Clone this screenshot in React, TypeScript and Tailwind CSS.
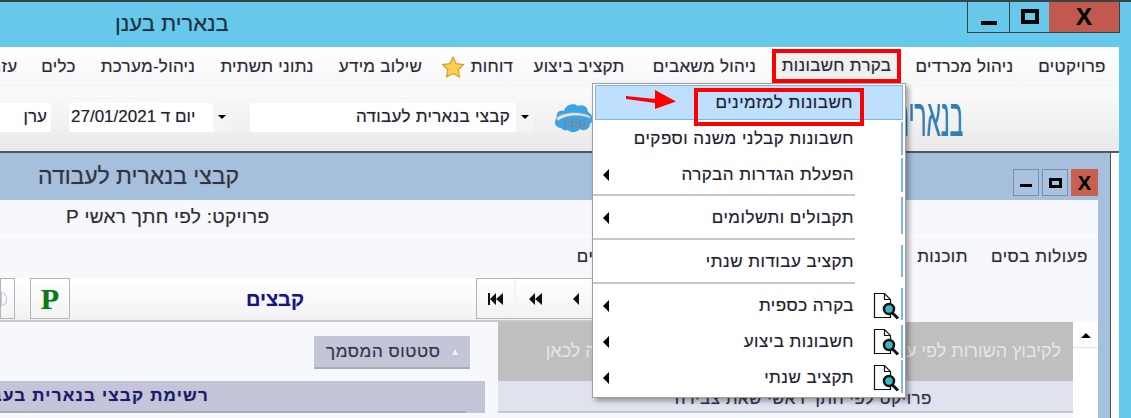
const MENU = [
  { label: "פרויקטים", w: "w-[68px]", ml: "ml-[26px]" },
  { label: "ניהול מכרדים", w: "w-[95px]", ml: "ml-[16px]" },
  { label: "בקרת חשבונות", w: "w-[129px]", ml: "ml-[14px]", boxed: true },
  { label: "ניהול משאבים", w: "w-[107px]", ml: "ml-[24px]" },
  { label: "תקציב ביצוע", w: "w-[96px]", ml: "ml-[17px]" },
  { label: "דוחות", w: "w-[44px]", ml: "ml-[5px]" },
  { star: true, w: "w-[24px]", ml: "ml-[17px]" },
  { label: "שילוב מידע", w: "w-[87px]", ml: "ml-[24px]" },
  { label: "נתוני תשתית", w: "w-[92px]", ml: "ml-[25px]" },
  { label: "ניהול-מערכת", w: "w-[96px]", ml: "ml-[24px]" },
  { label: "כלים", w: "w-[35px]", ml: "ml-[24px]" },
  { label: "עזרה", w: "w-[35px]", ml: "" },
];

const POPUP_ROWS = [
  { label: "חשבונות קבלני משנה וספקים", h: "h-[38px]" },
  { label: "הפעלת הגדרות הבקרה", h: "h-[34px]", sub: true },
  { sep: true },
  { label: "תקבולים ותשלומים", h: "h-[37px]", sub: true },
  { sep: true },
  { label: "תקציב עבודות שנתי", h: "h-[37px]" },
  { sep: true },
  { label: "בקרה כספית", h: "h-[37px]", sub: true, icon: true },
  { label: "חשבונות ביצוע", h: "h-[36px]", sub: true, icon: true },
  { label: "תקציב שנתי", h: "h-[36px]", sub: true, icon: true },
];

// light blue slivers left over along the right edge of the menu
const EDGE_STRIPS = [
  "top-[38px] h-[33px]",
  "top-[74px] h-[34px]",
  "top-[113px] h-[37px]",
  "top-[161px] h-[32px]",
  "top-[204px] h-[32px]",
  "top-[241px] h-[33px]",
  "top-[276px] h-[33px]",
];

function Star() {
  return (
    <svg width="25" height="25" viewBox="0 0 25 25">
      <path
        d="M12.5 1.5l3.3 7 7.7 1-5.6 5.3 1.4 7.7-6.8-3.7-6.8 3.7 1.4-7.7L1.5 9.500l7.700-1z"
        fill="#fbcf4e"
        stroke="#d99a2b"
        strokeWidth="1.2"
        strokeLinejoin="round"
      />
    </svg>
  );
}

function Cloud() {
  return (
    <svg width="42" height="38" viewBox="0 0 42 38">
      <path
        d="M8 30c-6 0-8-7-4-10-2-6 4-9 7-7 1-6 10-9 14-5 5-2 10 1 10 6 5 2 6 9 2 12 0 5-6 8-10 5-3 4-10 4-12 1-3 1-5 0-7-2z"
        fill="#3aa5e4"
      />
      <path d="M3 20c8-7 26-7 34-2l1 3c-9-5-25-4-33 2z" fill="#dbe3ea" stroke="#7d8b99" strokeWidth="0.6" />
      <text x="12" y="30" fontSize="10" fontStyle="italic" fontWeight="700" fill="#7f93a8" fontFamily="'Liberation Sans', sans-serif">
        PRO
      </text>
    </svg>
  );
}

function DocSearch() {
  return (
    <svg width="27" height="28" viewBox="0 0 27 28">
      <path d="M1.500 1.500h10l6 6v18h-16z" fill="#fff" stroke="#111" strokeWidth="1.200" />
      <path d="M11.500 1.500v6h6" fill="none" stroke="#111" strokeWidth="1.200" />
      <circle cx="16" cy="17" r="5" fill="#35b8c8" stroke="#111" strokeWidth="2.500" />
      <path d="M19.500 21l5.500 5.500" stroke="#111" strokeWidth="3" />
    </svg>
  );
}

function NavGlyph({ kind }: { kind: "first" | "prev" | "back" }) {
  return (
    <svg width="18" height="14" viewBox="0 0 18 14" fill="#111">
      {kind === "first" && <path d="M1 1h2v12H1zM9 1v12L3 7zM16 1v12l-7-6z" />}
      {kind === "prev" && <path d="M8 1v12L2 7zM15 1v12L8 7z" />}
      {kind === "back" && <path d="M12 1v12L6 7z" />}
    </svg>
  );
}

function TitleButtons() {
  return (
    <div className="flex h-[31px] border-b border-l border-r border-[#3c4347]">
      <div className="w-[42px] border-r border-[#3c4347] flex justify-center items-end pb-[7px]">
        <div className="w-[16px] h-[4px] bg-black" />
      </div>
      <div className="w-[39px] flex justify-center pt-[7px]">
        <div className="w-[18px] h-[15px] border-[4px] border-black" />
      </div>
      <div className="w-[70px] bg-[#c1594f] flex justify-center items-center font-bold text-[24px] text-black leading-none">X</div>
    </div>
  );
}

function SmallButton({ children, close }: { children: React.ReactNode; close?: boolean }) {
  return (
    <div className={`h-[27px] flex items-center justify-center border border-[#7d8fa8] ${close ? "w-[27px] bg-[#c9604f] border-[#c9604f]" : "w-[26px] bg-[#a9c2df]"}`}>
      {children}
    </div>
  );
}

function Popup() {
  return (
    <div className="absolute left-[592px] top-[81px] w-[314px] h-[315px] z-10 bg-white border border-[#a0a0a0] shadow-[3px_3px_5px_rgba(0,0,0,0.35)] text-[17px] tracking-[0.5px] text-[#22222e] pt-[1px] px-[2px]" dir="rtl">
      <div className="h-[35px] bg-[#bfdfff] border border-[#7db5ee] flex items-center pr-[49px]">
        <span>חשבונות למזמינים</span>
      </div>
      <div className="absolute left-[101px] top-[4px] w-[170px] h-[38px] border-[4px] border-[#ff0000]" />
      <svg className="absolute left-[33px] top-[6px]" width="50" height="19" viewBox="0 0 50 19">
        <path d="M0 6l29 3V0l21 11.500L29 19v-6L0 9z" fill="#ff0000" />
      </svg>
      {EDGE_STRIPS.map((s) => (
        <div key={s} className={`absolute left-[308px] w-[2px] bg-[#7db5ee] ${s}`} />
      ))}
      {POPUP_ROWS.map((r, i) =>
        r.sep ? (
          <div key={i} className="h-[2px] mt-[2px] mb-[3px] bg-[#c8c8c8] mr-[48px] -ml-[1px] w-[262px]" />
        ) : (
          <div key={i} className={`flex items-center ${r.h} pr-[3px]`}>
            <div className="w-[28px] flex justify-center">{r.icon && <DocSearch />}</div>
            <span className="mr-[18px] whitespace-nowrap">{r.label}</span>
            {r.sub && <span className="mr-auto ml-[8px] w-0 h-0 border-y-[6px] border-y-transparent border-r-[6px] border-r-black" />}
          </div>
        )
      )}
    </div>
  );
}

export default function App() {
  return (
    <div className="relative w-[1131px] h-[418px] overflow-hidden bg-[#66c9ec] font-['Liberation_Sans',sans-serif] border-t-2 border-[#3c4347] [text-shadow:0_0_1px_rgba(40,40,60,0.35)]">
      {/* window title */}
      <div className="h-[45px] flex items-start pl-[115px] pr-[11px]">
        <div className="text-[22px] leading-[44px] text-[#22303a]" dir="rtl">בנארית בענן</div>
        <div className="ml-auto"><TitleButtons /></div>
      </div>

      <div className="w-[1119px] flex flex-col bg-white">
        {/* menu */}
        <div className="h-[40px] flex flex-row-reverse items-center justify-start pr-[13px] text-[17px] tracking-[0.3px] text-[#2a2a36] bg-gradient-to-b from-white to-[#f6f6f6] overflow-hidden">
          {MENU.map((m, i) => (
            <div key={i} dir="rtl" className={`shrink-0 flex items-center justify-center whitespace-nowrap ${m.w} ${m.ml} ${m.boxed ? "h-[34px] border-[4px] border-[#ff0000] bg-[#f0f0f0] mt-[-2px]" : ""}`}>
              {m.star ? <Star /> : m.label}
            </div>
          ))}
        </div>

        {/* toolbar */}
        <div className="h-[66px] flex items-center bg-gradient-to-b from-[#fbfbfb] to-[#e9e9e9] text-[17px] text-[#22222e] border-b-2 border-[#55585c] pb-[4px]">
          <div className="w-[51px] h-[29px] bg-white flex items-center justify-end pr-[4px]"><span dir="rtl">ערן</span></div>
          <div className="ml-[18px] w-[162px] h-[29px] bg-white flex items-center justify-between">
            <span className="ml-[2px] whitespace-nowrap" dir="rtl">יום ד 27/01/2021</span>
            <div className="w-[18px] h-full bg-[#f4f4f4] flex items-center justify-center"><span className="border-x-[4px] border-x-transparent border-t-[4px] border-t-black" /></div>
          </div>
          <div className="ml-[19px] w-[284px] h-[29px] bg-white flex items-center justify-end">
            <span className="mr-[6px] tracking-[0.3px]" dir="rtl">קבצי בנארית לעבודה</span>
            <div className="w-[18px] h-full bg-[#f4f4f4] flex items-center justify-center"><span className="border-x-[4px] border-x-transparent border-t-[4px] border-t-black" /></div>
          </div>
          <div className="ml-[19px] w-[42px]"><Cloud /></div>
          <div className="ml-[296px] w-[75px] flex justify-center">
            <span className="text-[54px] leading-none text-[#2d7fb8] scale-x-[0.42] whitespace-nowrap" dir="rtl">בנארית</span>
          </div>
        </div>

        {/* inner window */}
        <div className="flex">
          <div className="w-[1111px] bg-[#a6bfdc] border-r border-[#4c5157]">
            <div className="h-[47px] flex items-center pl-[38px] pr-[12px]">
              <div className="text-[23px] text-[#333340]" dir="rtl">קבצי בנארית לעבודה</div>
              <div className="ml-auto flex gap-[3px] mt-[12px]">
                <SmallButton><div className="w-[12px] h-[3px] bg-black mt-[5px]" /></SmallButton>
                <SmallButton><div className="w-[13px] h-[10px] border-[3px] border-black" /></SmallButton>
                <SmallButton close><span className="font-bold text-[20px] leading-none">X</span></SmallButton>
              </div>
            </div>

            <div className="w-[1098px] bg-[#f7f8fb]">
              <div className="h-[36px] flex items-center pl-[66px] border-b border-white text-[19px] tracking-[0.3px] text-[#2c2c38]">
                <span dir="rtl">פרויקט: לפי חתך ראשי P</span>
              </div>
              <div className="h-[42px] flex items-center text-[17px] tracking-[0.5px] text-[#2c2c38] whitespace-nowrap" dir="rtl">
                <span className="mr-[10px]">פעולות בסים</span>
                <span className="mr-[23px]">תוכנות</span>
                <span className="mr-[292px]">כספים</span>
              </div>
              <div className="h-[44px] flex items-start border-b-2 border-[#c8c8c8] w-[600px] bg-gradient-to-b from-white to-[#f2f2f2]">
                <div className="w-[15px] h-[41px] border border-[#b4b4b4] flex items-center"><div className="w-[6px] h-[14px] rounded-r-full border border-[#b9cbe0]" /></div>
                <div className="ml-[15px] w-[40px] h-[41px] border border-[#b4b4b4] flex items-center justify-center text-[30px] font-bold text-[#0a7a16] font-['Liberation_Serif',serif]">P</div>
                <div className="w-[234px] h-[41px] flex items-center justify-start text-[20px] font-bold text-[#14148c]" dir="rtl">קבצים</div>
                <div className="ml-[172px] flex h-[41px] border border-[#b4b4b4]">
                  <div className="w-[39px] flex items-center justify-center border-r-2 border-[#f4f4f4]"><NavGlyph kind="first" /></div>
                  <div className="w-[40px] flex items-center justify-center"><NavGlyph kind="prev" /></div>
                  <div className="w-[40px] flex items-center justify-center"><NavGlyph kind="back" /></div>
                </div>
              </div>
              <div className="h-[96px] flex">
                <div className="w-[485px] shrink-0">
                  <div className="w-[156px] h-[33px] ml-[314px] mt-[14px] bg-[#c5c5d9] border-b-2 border-[#adadad] flex items-center justify-end pr-[9px] text-[17px] tracking-[0.6px] text-[#33334a]">
                    <span className="text-[11px] text-[#f2f2f2] order-last ml-[9px]">▲</span>
                    <span dir="rtl">סטטוס המסמך</span>
                  </div>
                  <div className="flex mt-[12px] h-[32px]">
                    <div className="w-[466px] bg-[#c5c5d9] border-b-2 border-[#a9a9bd] flex items-center justify-start text-[17px] tracking-[1.2px] font-bold text-[#1a1a6e] whitespace-nowrap">
                      <span dir="rtl" className="w-[209px] overflow-hidden">רשימת קבצי בנארית בעבודה</span>
                    </div>
                    <div className="w-[19px] bg-[#c5c5d9]" />
                  </div>
                </div>
                <div className="w-[13px]" />
                <div className="w-[575px] shrink-0">
                  <div className="h-[59px] bg-[#bfbfbf] flex items-center justify-end pr-[12px] text-[18px] text-[#e6e6e6] whitespace-nowrap [text-shadow:none]">
                    <span dir="rtl">לקיבוץ השורות לפי עמודה מסויימת יש לגרור את כותרת העמודה לכאן</span>
                  </div>
                  <div className="h-[32px] bg-[#dfe3ee] border-b-2 border-[#c2c7d4] flex items-center justify-end pr-[141px] text-[17px] tracking-[0.5px] text-[#33334a]">
                    <span dir="rtl" className="mt-[6px] whitespace-nowrap">פרויקט לפי חתך ראשי שאת צבירה</span>
                  </div>
                </div>
                <div className="w-[25px] bg-white">
                  <div className="h-[24px] mt-[2px] border-b border-[#e2e2e2] flex items-center justify-center">
                    <span className="border-x-[5px] border-x-transparent border-b-[5px] border-b-black" />
                  </div>
                </div>
              </div>
            </div>
          </div>
          <div className="flex-1 bg-white" />
        </div>
      </div>

      <Popup />
    </div>
  );
}
